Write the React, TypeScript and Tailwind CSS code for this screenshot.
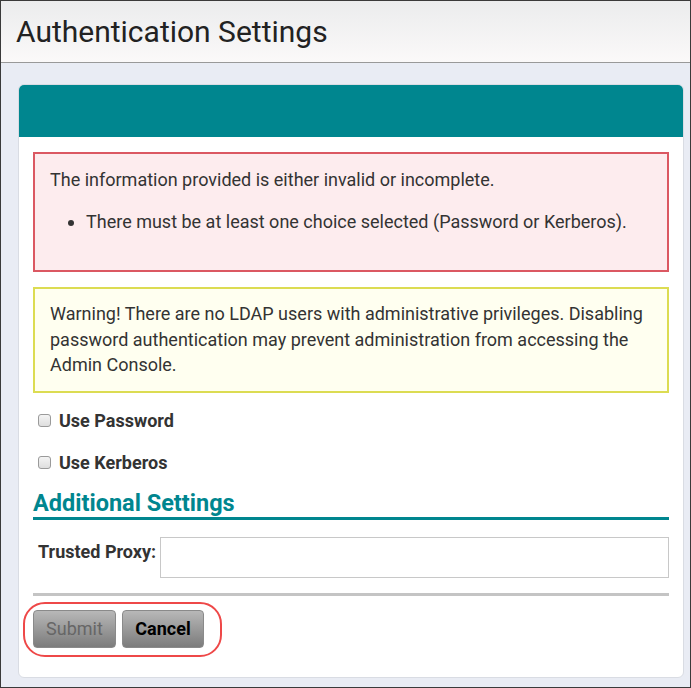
export default function App() {
  return (
    <div className="flex h-[688px] w-[691px] flex-col overflow-hidden border border-[#3a3a3a] bg-[#e9ecf4] font-['Roboto',sans-serif] text-[#333]">
      <header className="flex h-[62px] shrink-0 items-center border-b border-[#999] bg-gradient-to-b from-[#ebeced] to-[#fbf9f9] px-[15px]">
        <h1 className="text-[30px] leading-none text-[#222]">Authentication Settings</h1>
      </header>

      <main className="flex-1 pb-[9px] pl-[17px] pr-[6px] pt-[21px]">
        <div className="flex h-full flex-col overflow-hidden rounded-[6px] border border-[#d9dce3] bg-white">
          <div className="h-[52px] shrink-0 bg-[#00868f]" />

          <div className="px-[14px] pt-[15px]">
            <div className="border-2 border-[#db5862] bg-[#fdecee] px-[15px] pb-[35px] pt-[13px] text-[18px] leading-[26px]">
              <p>The information provided is either invalid or incomplete.</p>
              <ul className="ml-[36px] mt-[16px] list-disc">
                <li>There must be at least one choice selected (Password or Kerberos).</li>
              </ul>
            </div>

            <div className="mt-[15px] border-2 border-[#dcdc52] bg-[#fffff0] px-[15px] pb-[13px] pt-[12px] text-[18px] leading-[25.5px]">
              Warning! There are no LDAP users with administrative privileges. Disabling password authentication may
              prevent administration from accessing the Admin Console.
            </div>

            <div className="mt-[19px] flex flex-col gap-[24px] pl-[5px] text-[18px] font-bold leading-[18px]">
              <label className="flex items-center gap-[8px]">
                <span className="h-[13px] w-[13px] rounded-[3px] border border-[#9a9a9a] bg-gradient-to-b from-[#f4f4f4] to-[#dedede]" />
                Use Password
              </label>
              <label className="flex items-center gap-[8px]">
                <span className="h-[13px] w-[13px] rounded-[3px] border border-[#9a9a9a] bg-gradient-to-b from-[#f4f4f4] to-[#dedede]" />
                Use Kerberos
              </label>
            </div>

            <h2 className="mt-[17px] border-b-[3px] border-[#00868f] text-[23.5px] font-bold leading-[28px] text-[#00868f]">
              Additional Settings
            </h2>

            <div className="mt-[17px] flex items-start pl-[5px]">
              <span className="w-[122px] pt-[6px] text-[18px] font-bold leading-[18px]">Trusted Proxy:</span>
              <input className="h-[41px] flex-1 border border-[#c8c8c8] bg-white px-2 outline-none" />
            </div>

            <div className="mt-[15px] h-[3px] bg-[#c4c4c4]" />

            <div className="relative mt-[14px] flex gap-[6px]">
              <div className="absolute left-[-10px] top-[-8px] h-[55px] w-[199px] rounded-[22px] border-2 border-[#ee4848]" />
              <button className="h-[38px] w-[83px] rounded-[4px] border border-[#8a8a8a] bg-gradient-to-b from-[#b8b8b8] to-[#7c7c7c] text-[18px] text-[#666]">
                Submit
              </button>
              <button className="h-[38px] w-[82px] rounded-[4px] border border-[#8a8a8a] bg-gradient-to-b from-[#b8b8b8] to-[#7c7c7c] text-[18px] font-bold text-black">
                Cancel
              </button>
            </div>
          </div>
        </div>
      </main>
    </div>
  )
}
